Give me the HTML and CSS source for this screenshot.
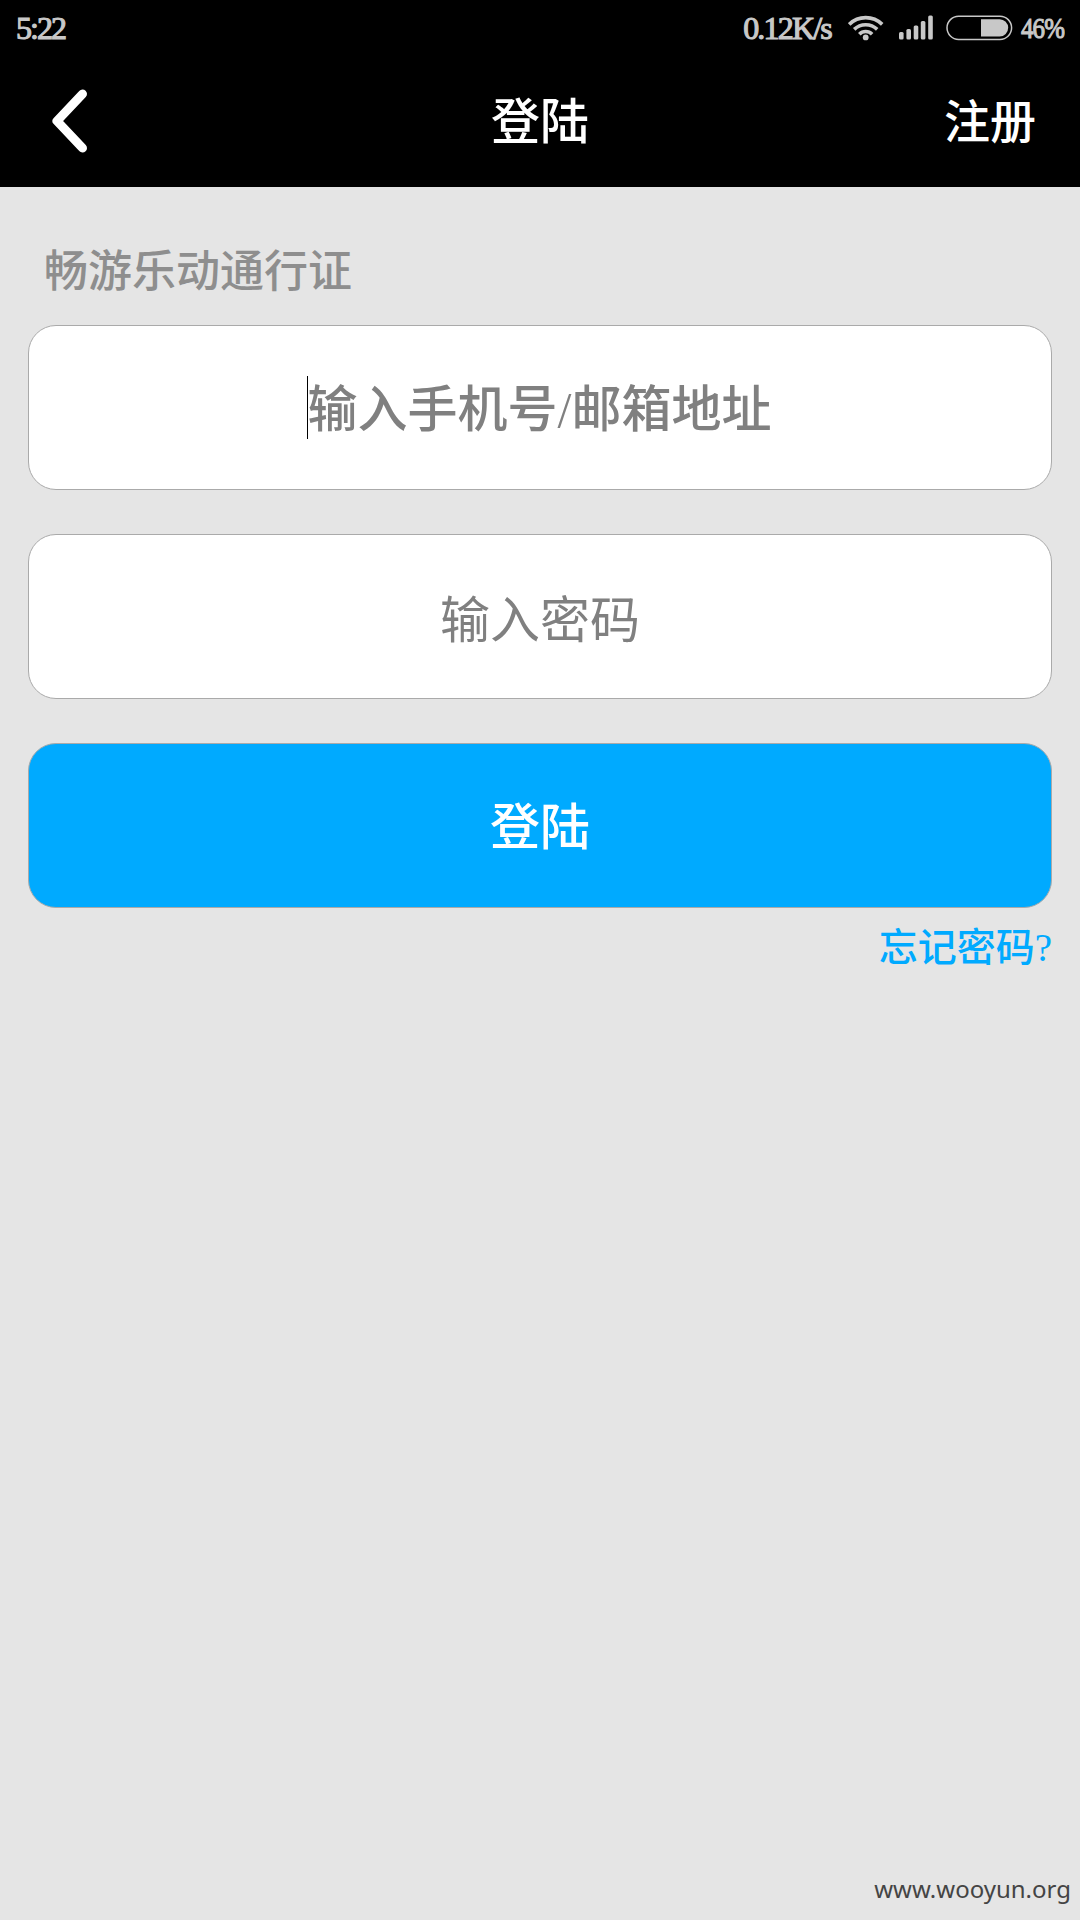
FILE: index.html
```html
<!DOCTYPE html>
<html lang="zh-CN">
<head>
  <meta charset="UTF-8" />
  <meta name="viewport" content="width=device-width,initial-scale=1" />
  <title>登陆</title>
  <link rel="stylesheet" href="styles.css">
</head>
<body>

  <!-- STATUS BAR -->
  <div class="status">
    <span class="time">5:22</span>
    <span class="speed">0.12K/s</span>
    <svg class="wifi" width="36" height="26" viewBox="0 0 36 26" fill="none" stroke="#c8c8c8" stroke-width="3.6">
      <path d="M1.2 9.4a23.6 23.6 0 0 1 33 0"/>
      <path d="M6.2 14.4a16.6 16.6 0 0 1 23 0"/>
      <path d="M11.3 19.2a9 9 0 0 1 12.8 0"/>
      <circle cx="17.7" cy="22.4" r="2.9" fill="#c8c8c8" stroke="none"/>
    </svg>
    <svg class="signal" width="34" height="25" viewBox="0 0 34 25" fill="#c8c8c8">
      <rect x="0" y="17" width="4.6" height="7.6" rx="1.5"/>
      <rect x="7.4" y="14" width="4.6" height="10.6" rx="1.5"/>
      <rect x="14.7" y="10.6" width="4.6" height="14" rx="1.5"/>
      <rect x="21.8" y="6" width="4.6" height="18.6" rx="1.5"/>
      <rect x="29.2" y="0.4" width="4.6" height="24.2" rx="1.5"/>
    </svg>
    <svg class="battery" width="67" height="26" viewBox="0 0 67 26">
      <rect x="1" y="1.2" width="64.6" height="23.2" rx="11.6" fill="none" stroke="#c8c8c8" stroke-width="1.5"/>
      <path d="M35 4.2h18.6a8.6 8.6 0 0 1 0 17.2H35z" fill="#c8c8c8"/>
    </svg>
    <span class="percent">46%</span>
  </div>

  <!-- TITLE BAR -->
  <div class="navbar">
    <svg class="back" width="40" height="70" viewBox="0 0 40 70" fill="none" stroke="#fff" stroke-width="9" stroke-linecap="round" stroke-linejoin="round">
      <path d="M33.5 8L8 35l25.500 27"/>
    </svg>
    <h1>登陆</h1>
    <span class="register">注册</span>
  </div>

  <div class="form">
    <div class="label">畅游乐动通行证</div>
    <div class="field"><i class="caret"></i><span class="text">输入手机号/邮箱地址</span></div>
    <div class="field password"><span class="text">输入密码</span></div>
    <div class="field submit"><span class="text">登陆</span></div>
    <div class="forgot">忘记密码?</div>
  </div>

  <div class="site">www.wooyun.org</div>

</body>
</html>
```

FILE: styles.css
```css
* { box-sizing: border-box; }
body { margin: 0; width: 1080px; height: 1920px; overflow: hidden; display: flex; flex-direction: column; background: #e5e5e5; font-family: "Liberation Serif", "Noto Sans CJK SC", serif; font-weight: 500; }

.status { height: 55px; padding: 0 16px; display: flex; align-items: center; background: #000; color: #c8c8c8; font-size: 32px; line-height: 54px; white-space: nowrap; -webkit-text-stroke: 1.1px #c8c8c8; }
.time { letter-spacing: -2px; }
.speed { margin-left: auto; letter-spacing: -1.8px; }
.wifi { margin-left: 17px; }
.signal { margin-left: 15px; }
.battery { margin-left: 13px; }
.percent { margin-left: 8px; width: 43px; font-size: 30px; letter-spacing: -1px; transform: scaleX(.83); transform-origin: left; }

.navbar { height: 132px; padding: 4px 44px 0 49px; display: grid; grid-template-columns: 1fr auto 1fr; align-items: center; background: #000; color: #fff; }
.back { margin-top: -4px; }
.navbar h1 { margin: 0 5px 0 0; font-size: 49px; font-weight: 500; line-height: 70px; }
.register { justify-self: end; font-size: 46px; line-height: 70px; }

.form { padding: 56px 28px 0; }
.label { height: 60px; margin: 0 0 22px 16px; font-size: 44px; line-height: 60px; color: #8e8e8e; }
.field { height: 165px; margin-bottom: 44px; display: flex; align-items: center; justify-content: center; background: #fff; border: 1px solid #aaa; border-radius: 28px; font-size: 50px; line-height: 70px; color: #808080; }
.text { padding-top: 5px; }
.caret { width: 1px; height: 63px; margin-left: -2px; background: #000; }
.password { font-weight: 400; }
.password .text { padding-top: 8px; }
.submit { margin-bottom: 12px; background: #0af; color: #fff; }
.forgot { font-size: 39px; line-height: 56px; text-align: right; color: #0af; }

.site { margin-top: auto; padding: 0 9px 13px 0; font-family: "Noto Sans", sans-serif; font-weight: 400; font-size: 24px; line-height: 36px; text-align: right; color: #444; }
```
